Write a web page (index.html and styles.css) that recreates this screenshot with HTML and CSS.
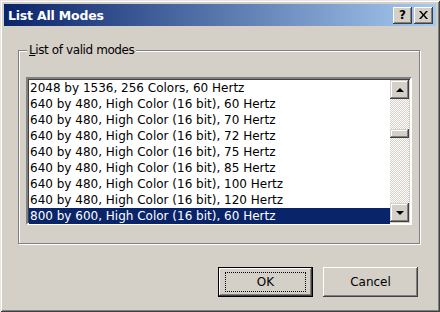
FILE: index.html
```html
<!DOCTYPE html>
<html>
<head>
<meta charset="utf-8">
<link rel="stylesheet" href="styles.css">
</head>
<body>
<div class="window">
  <div class="titlebar">
    <span class="title">List All Modes</span>
    <div class="tb-buttons">
      <div class="tb-btn">?</div>
      <div class="tb-btn">
        <svg width="9" height="8" viewBox="0 0 9 8"><path d="M0 0h2l2.5 3 2.5-3h2L5.5 4 9 8H7L4.5 5 2 8H0l3.5-4z" fill="#000"/></svg>
      </div>
    </div>
  </div>
  <div class="body">
    <div class="group">
      <div class="legend"><u>L</u>ist of valid modes</div>
      <div class="listbox">
        <div class="items">
          <div class="item">2048 by 1536, 256 Colors, 60 Hertz</div>
          <div class="item">640 by 480, High Color (16 bit), 60 Hertz</div>
          <div class="item">640 by 480, High Color (16 bit), 70 Hertz</div>
          <div class="item">640 by 480, High Color (16 bit), 72 Hertz</div>
          <div class="item">640 by 480, High Color (16 bit), 75 Hertz</div>
          <div class="item">640 by 480, High Color (16 bit), 85 Hertz</div>
          <div class="item">640 by 480, High Color (16 bit), 100 Hertz</div>
          <div class="item">640 by 480, High Color (16 bit), 120 Hertz</div>
          <div class="item selected">800 by 600, High Color (16 bit), 60 Hertz</div>
        </div>
        <div class="scrollbar">
          <div class="sb-btn"><span class="arrow up"></span></div>
          <div class="track">
            <div class="thumb"></div>
          </div>
          <div class="sb-btn"><span class="arrow down"></span></div>
        </div>
      </div>
    </div>
    <div class="buttons">
      <div class="btn default"><span class="focus">OK</span></div>
      <div class="btn">Cancel</div>
    </div>
  </div>
</div>
</body>
</html>
```
FILE: styles.css
```css
* { box-sizing: border-box; margin: 0; padding: 0; }
html, body { width: 440px; height: 312px; overflow: hidden; background: #d4d0c8; }
body { font-family: "DejaVu Sans", Verdana, sans-serif; font-size: 12px; color: #000; }

.window {
  width: 440px; height: 312px; background: #d4d0c8; padding: 4px;
  display: flex; flex-direction: column;
  box-shadow: inset 1px 1px #e8e6e2, inset -1px -1px #404040, inset 2px 2px #fff, inset -2px -2px #808080;
}
.titlebar {
  height: 22px; flex: none;
  background: linear-gradient(to right, #0a246a, #a6caf0);
  display: flex; align-items: center; justify-content: space-between;
  padding: 0 3px 0 4px;
}
.title { color: #fff; font-weight: bold; font-size: 12.5px; letter-spacing: -0.2px; }
.tb-buttons { display: flex; gap: 2px; }
.tb-btn {
  width: 19px; height: 17px; background: #d4d0c8;
  box-shadow: inset -1px -1px #404040, inset 1px 1px #fff, inset -2px -2px #808080;
  display: flex; align-items: center; justify-content: center;
  font-weight: bold; font-size: 12px; padding-bottom: 1px;
}

.body { flex: 1; padding: 24px 16px 0 14px; display: flex; flex-direction: column; }

.group {
  border: 1px solid #808080;
  box-shadow: inset 1px 1px #fff, 1px 1px #fff;
  padding: 0 7px 18px 7px;
  display: flex; flex-direction: column;
}
.legend {
  align-self: flex-start; margin: -8px 0 0 1px; padding: 0 2px;
  background: #d4d0c8; line-height: 14px; letter-spacing: -0.4px;
}
.listbox {
  margin-top: 20px; height: 148px; display: flex; background: #fff;
  border: 2px solid; border-color: #808080 #fff #fff #808080;
  box-shadow: inset 1px 1px #404040, inset -1px -1px #d4d0c8;
  padding: 1px 1px 1px 1px;
}
.items { flex: 1; display: flex; flex-direction: column; }
.item { height: 16px; line-height: 16px; padding-left: 1px; white-space: nowrap; }
.item.selected { background: #0a246a; color: #fff; }

.scrollbar { width: 19px; display: flex; flex-direction: column; }
.sb-btn {
  height: 19px; flex: none; background: #d4d0c8;
  box-shadow: inset -1px -1px #404040, inset 1px 1px #d4d0c8, inset -2px -2px #808080, inset 2px 2px #fff;
  display: flex; align-items: center; justify-content: center;
}
.arrow { width: 0; height: 0; border-left: 4px solid transparent; border-right: 4px solid transparent; }
.arrow.up { border-bottom: 4px solid #000; }
.arrow.down { border-top: 4px solid #000; }
.track {
  flex: 1; padding-top: 30px;
  background: repeating-conic-gradient(#fff 0 25%, #d4d0c8 0 50%) 0 0 / 2px 2px;
}
.thumb {
  height: 9px; background: #d4d0c8;
  box-shadow: inset -1px -1px #404040, inset 1px 1px #d4d0c8, inset -2px -2px #808080, inset 2px 2px #fff;
}

.buttons { display: flex; justify-content: flex-end; gap: 10px; margin-top: 23px; padding-right: 2px; }
.btn {
  width: 95px; height: 30px; background: #d4d0c8;
  box-shadow: inset -1px -1px #404040, inset 1px 1px #fff, inset -2px -2px #808080;
  display: flex; align-items: center; justify-content: center;
}
.btn.default {
  border: 1px solid #000;
  box-shadow: inset -1px -1px #404040, inset 1px 1px #fff, inset -2px -2px #808080;
}
.btn .focus {
  width: 81px; height: 20px; border: 1px dotted #000;
  display: flex; align-items: center; justify-content: center;
}
```
